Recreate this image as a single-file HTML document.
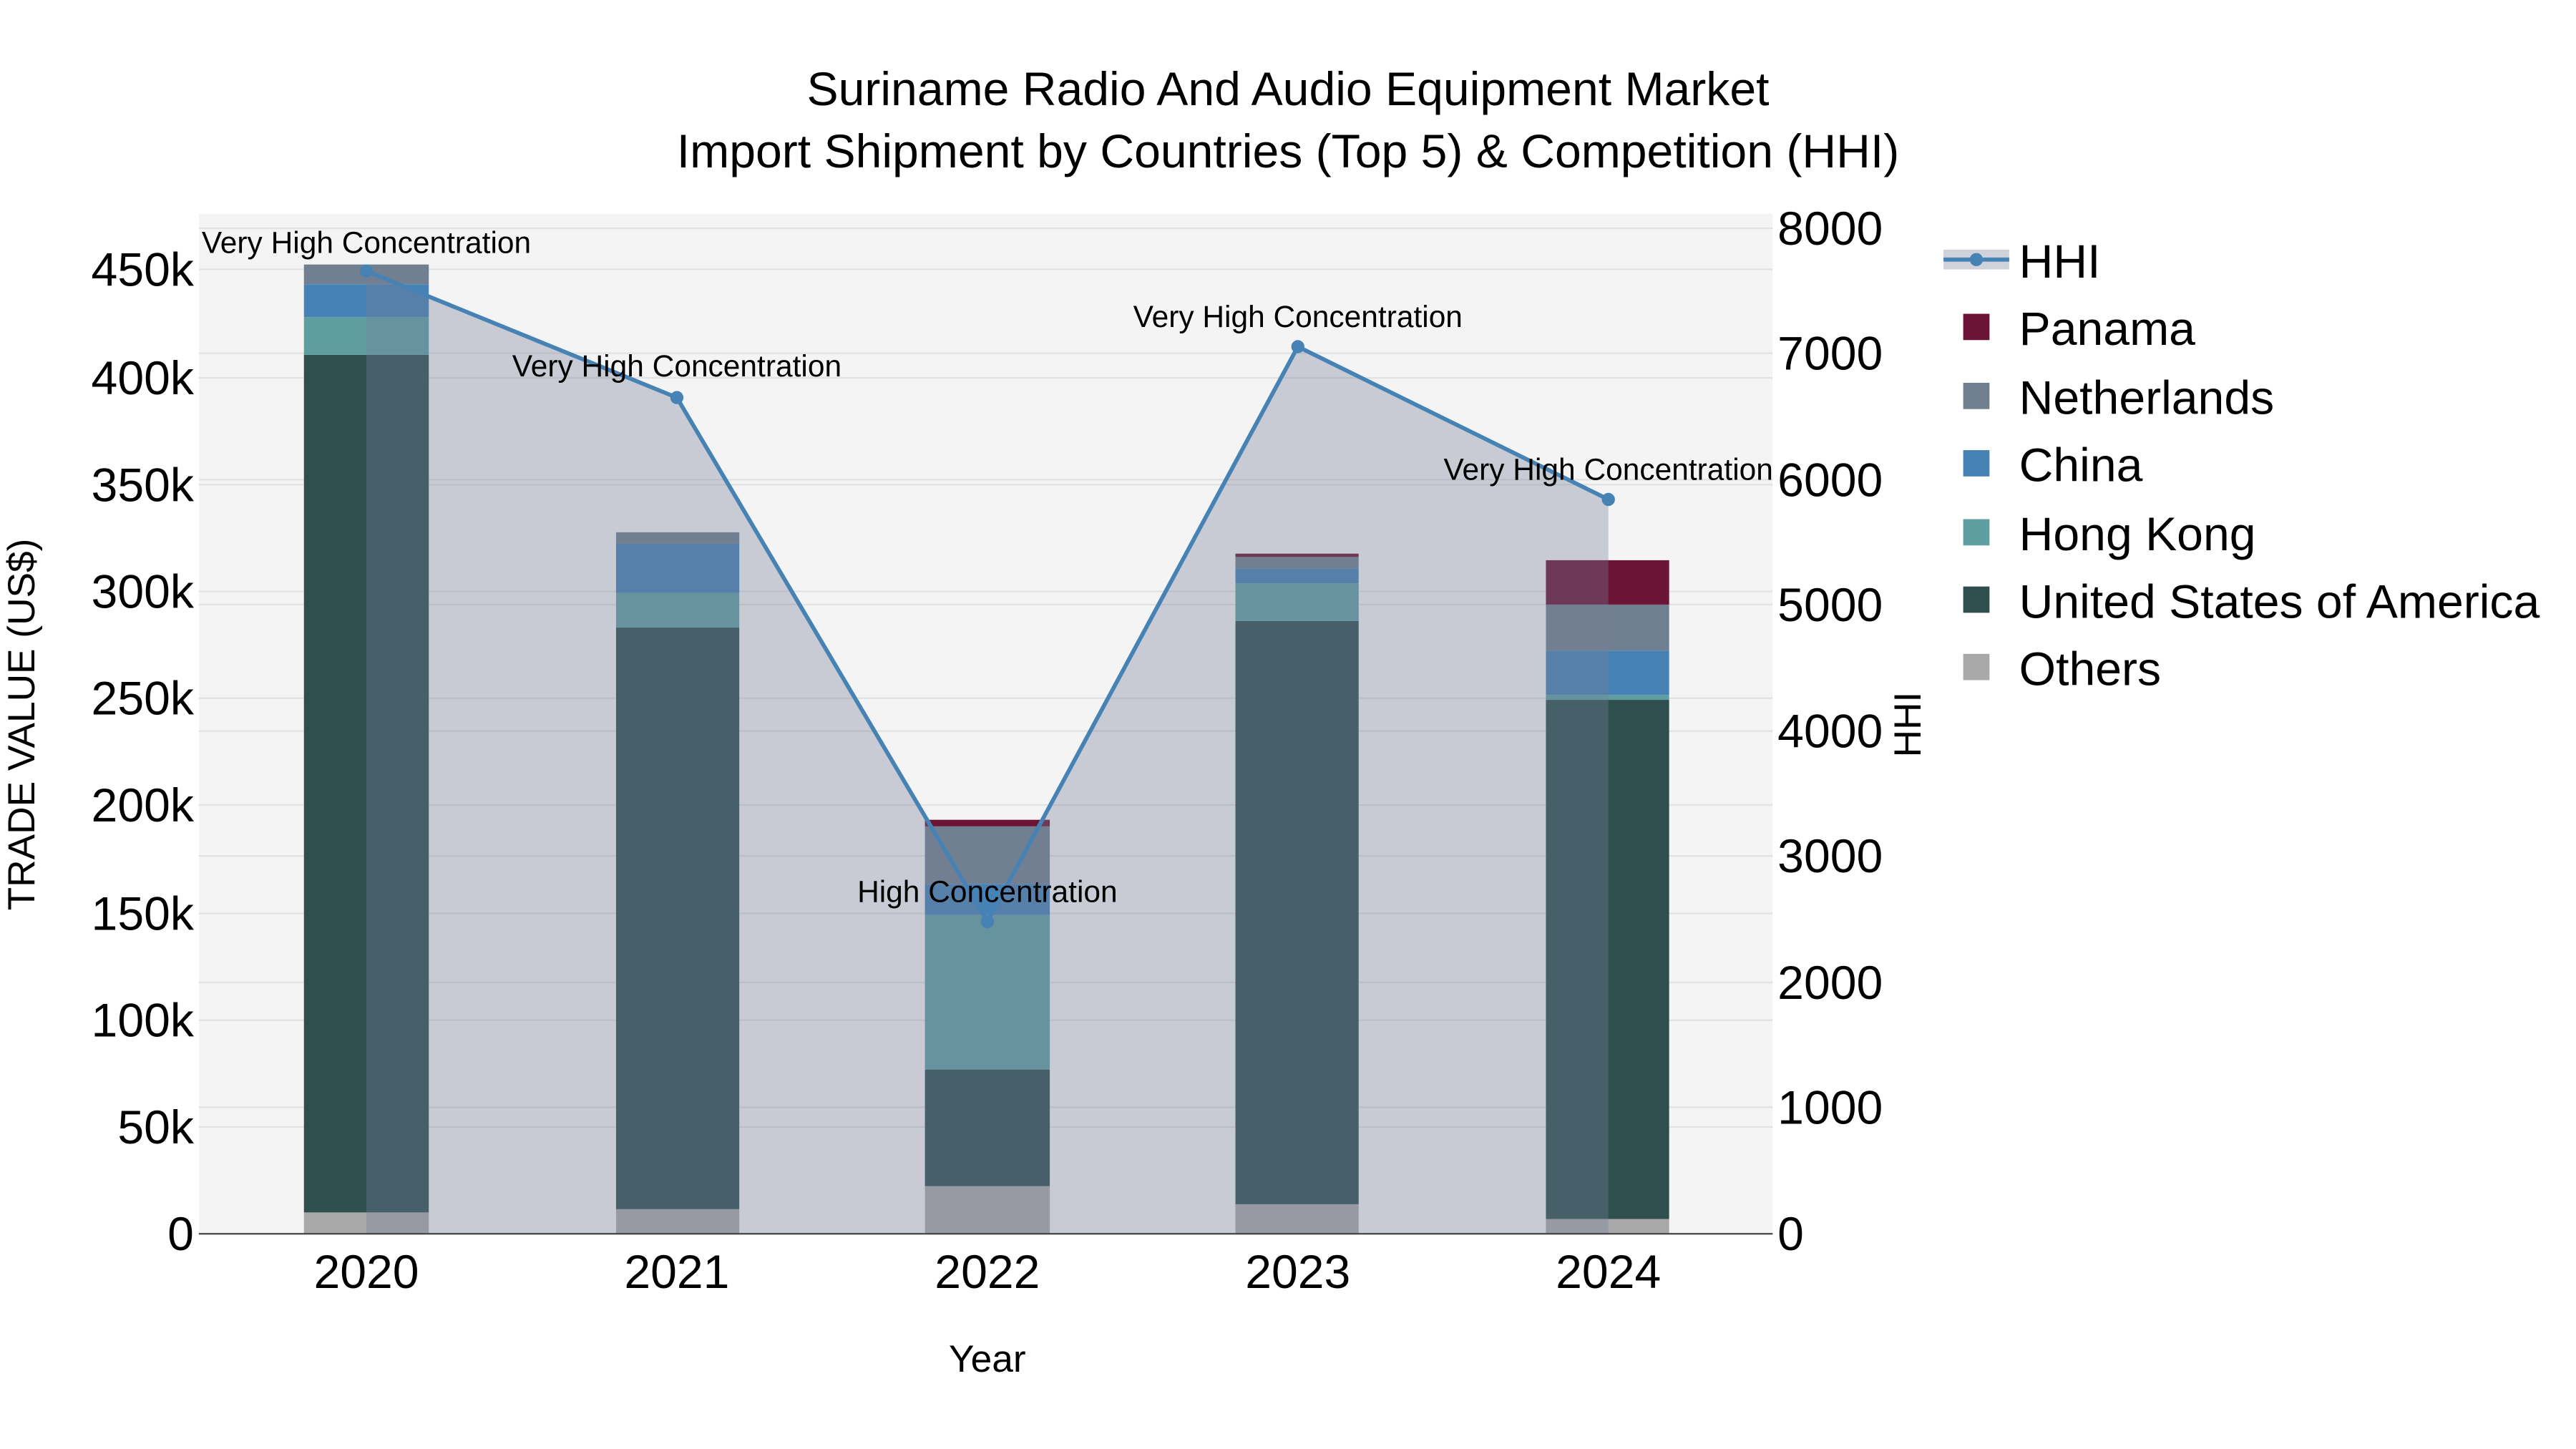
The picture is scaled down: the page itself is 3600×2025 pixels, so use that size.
<!DOCTYPE html>
<html><head><meta charset="utf-8"><style>
html,body{margin:0;padding:0;background:#fff;}
svg{display:block;}
text{font-family:"Liberation Sans",Arial,sans-serif;}
</style></head><body>
<svg width="3600" height="2025" viewBox="0 0 1568 882" preserveAspectRatio="none" xmlns="http://www.w3.org/2000/svg">
<rect x="0" y="0" width="1568" height="882" fill="#fff"/>
<rect x="121" y="130" width="958" height="621" fill="#f4f4f4"/>
<g stroke="#e2e2e2" stroke-width="1">
<line x1="121" x2="1079" y1="686" y2="686"/><line x1="121" x2="1079" y1="621" y2="621"/>
<line x1="121" x2="1079" y1="556" y2="556"/><line x1="121" x2="1079" y1="490" y2="490"/>
<line x1="121" x2="1079" y1="425" y2="425"/><line x1="121" x2="1079" y1="360" y2="360"/>
<line x1="121" x2="1079" y1="295" y2="295"/><line x1="121" x2="1079" y1="230" y2="230"/>
<line x1="121" x2="1079" y1="164" y2="164"/>
<line x1="121" x2="1079" y1="674" y2="674"/><line x1="121" x2="1079" y1="598" y2="598"/>
<line x1="121" x2="1079" y1="521" y2="521"/><line x1="121" x2="1079" y1="445" y2="445"/>
<line x1="121" x2="1079" y1="368" y2="368"/><line x1="121" x2="1079" y1="292" y2="292"/>
<line x1="121" x2="1079" y1="215" y2="215"/><line x1="121" x2="1079" y1="139" y2="139"/>
</g>
<g>
<rect x="185" y="738" width="76" height="13" fill="#a9a9a9"/>
<rect x="185" y="216" width="76" height="522" fill="#2f4f4f"/>
<rect x="185" y="193" width="76" height="23" fill="#5f9ea0"/>
<rect x="185" y="173" width="76" height="20" fill="#4682b4"/>
<rect x="185" y="161" width="76" height="12" fill="#708090"/>

<rect x="375" y="736" width="75" height="15" fill="#a9a9a9"/>
<rect x="375" y="382" width="75" height="354" fill="#2f4f4f"/>
<rect x="375" y="361" width="75" height="21" fill="#5f9ea0"/>
<rect x="375" y="331" width="75" height="30" fill="#4682b4"/>
<rect x="375" y="324" width="75" height="7" fill="#708090"/>

<rect x="563" y="722" width="76" height="29" fill="#a9a9a9"/>
<rect x="563" y="651" width="76" height="71" fill="#2f4f4f"/>
<rect x="563" y="557" width="76" height="94" fill="#5f9ea0"/>
<rect x="563" y="538" width="76" height="19" fill="#4682b4"/>
<rect x="563" y="503" width="76" height="35" fill="#708090"/>
<rect x="563" y="499" width="76" height="4" fill="#6b1436"/>

<rect x="752" y="733" width="75" height="18" fill="#a9a9a9"/>
<rect x="752" y="378" width="75" height="355" fill="#2f4f4f"/>
<rect x="752" y="355" width="75" height="23" fill="#5f9ea0"/>
<rect x="752" y="346" width="75" height="9" fill="#4682b4"/>
<rect x="752" y="339" width="75" height="7" fill="#708090"/>
<rect x="752" y="337" width="75" height="2" fill="#6b1436"/>

<rect x="941" y="742" width="75" height="9" fill="#a9a9a9"/>
<rect x="941" y="426" width="75" height="316" fill="#2f4f4f"/>
<rect x="941" y="423" width="75" height="3" fill="#5f9ea0"/>
<rect x="941" y="396" width="75" height="27" fill="#4682b4"/>
<rect x="941" y="368" width="75" height="28" fill="#708090"/>
<rect x="941" y="341" width="75" height="27" fill="#6b1436"/>
</g>
<polygon points="223,165 412,242 601,561 790,211 979,304 979,751 223,751" fill="rgb(118,125,152)" fill-opacity="0.35"/>
<polyline points="223,165 412,242 601,561 790,211 979,304" fill="none" stroke="#4682b4" stroke-width="2.5"/>
<g fill="#4682b4"><circle cx="223" cy="165" r="4"/><circle cx="412" cy="242" r="4"/><circle cx="601" cy="561" r="4"/><circle cx="790" cy="211" r="4"/><circle cx="979" cy="304" r="4"/></g>
<line x1="121" x2="1079" y1="751" y2="751" stroke="#444" stroke-width="1"/>
<g font-size="18.5" fill="#000" text-anchor="middle">
<text x="223" y="154">Very High Concentration</text>
<text x="412" y="229">Very High Concentration</text>
<text x="601" y="549">High Concentration</text>
<text x="790" y="199">Very High Concentration</text>
<text x="979" y="292">Very High Concentration</text>
</g>
<g font-size="28.8" fill="#000" text-anchor="end">
<text x="118" y="761">0</text><text x="118" y="696">50k</text><text x="118" y="631">100k</text>
<text x="118" y="566">150k</text><text x="118" y="500">200k</text><text x="118" y="435">250k</text>
<text x="118" y="370">300k</text><text x="118" y="305">350k</text><text x="118" y="240">400k</text>
<text x="118" y="174">450k</text>
</g>
<g font-size="28.8" fill="#000" text-anchor="start">
<text x="1082" y="761">0</text><text x="1082" y="684">1000</text><text x="1082" y="608">2000</text>
<text x="1082" y="531">3000</text><text x="1082" y="455">4000</text><text x="1082" y="378">5000</text>
<text x="1082" y="302">6000</text><text x="1082" y="225">7000</text><text x="1082" y="149">8000</text>
</g>
<g font-size="28.8" fill="#000" text-anchor="middle">
<text x="223" y="784">2020</text><text x="412" y="784">2021</text><text x="601" y="784">2022</text>
<text x="790" y="784">2023</text><text x="979" y="784">2024</text>
</g>
<text x="601" y="835" font-size="23.2" text-anchor="middle">Year</text>
<text transform="translate(21,441) rotate(-90)" font-size="23.2" text-anchor="middle">TRADE VALUE (US$)</text>
<text transform="translate(1169,441) rotate(-90)" font-size="23.2" text-anchor="middle">HHI</text>
<text x="784" y="64" font-size="28.8" text-anchor="middle">Suriname Radio And Audio Equipment Market</text>
<text x="784" y="102" font-size="28.8" text-anchor="middle">Import Shipment by Countries (Top 5) &amp; Competition (HHI)</text>
<rect x="1183" y="152" width="40" height="12" fill="rgb(118,125,152)" fill-opacity="0.35"/>
<line x1="1183" x2="1223" y1="158" y2="158" stroke="#4682b4" stroke-width="2.5"/>
<circle cx="1203" cy="158" r="4" fill="#4682b4"/>
<rect x="1195" y="191" width="16" height="16" fill="#6b1436"/>
<rect x="1195" y="233" width="16" height="16" fill="#708090"/>
<rect x="1195" y="274" width="16" height="16" fill="#4682b4"/>
<rect x="1195" y="316" width="16" height="16" fill="#5f9ea0"/>
<rect x="1195" y="357" width="16" height="16" fill="#2f4f4f"/>
<rect x="1195" y="398" width="16" height="16" fill="#a9a9a9"/>
<g font-size="28.8" fill="#000">
<text x="1229" y="169">HHI</text><text x="1229" y="210">Panama</text><text x="1229" y="252">Netherlands</text>
<text x="1229" y="293">China</text><text x="1229" y="335">Hong Kong</text><text x="1229" y="376">United States of America</text>
<text x="1229" y="417">Others</text>
</g>
</svg>
</body></html>
